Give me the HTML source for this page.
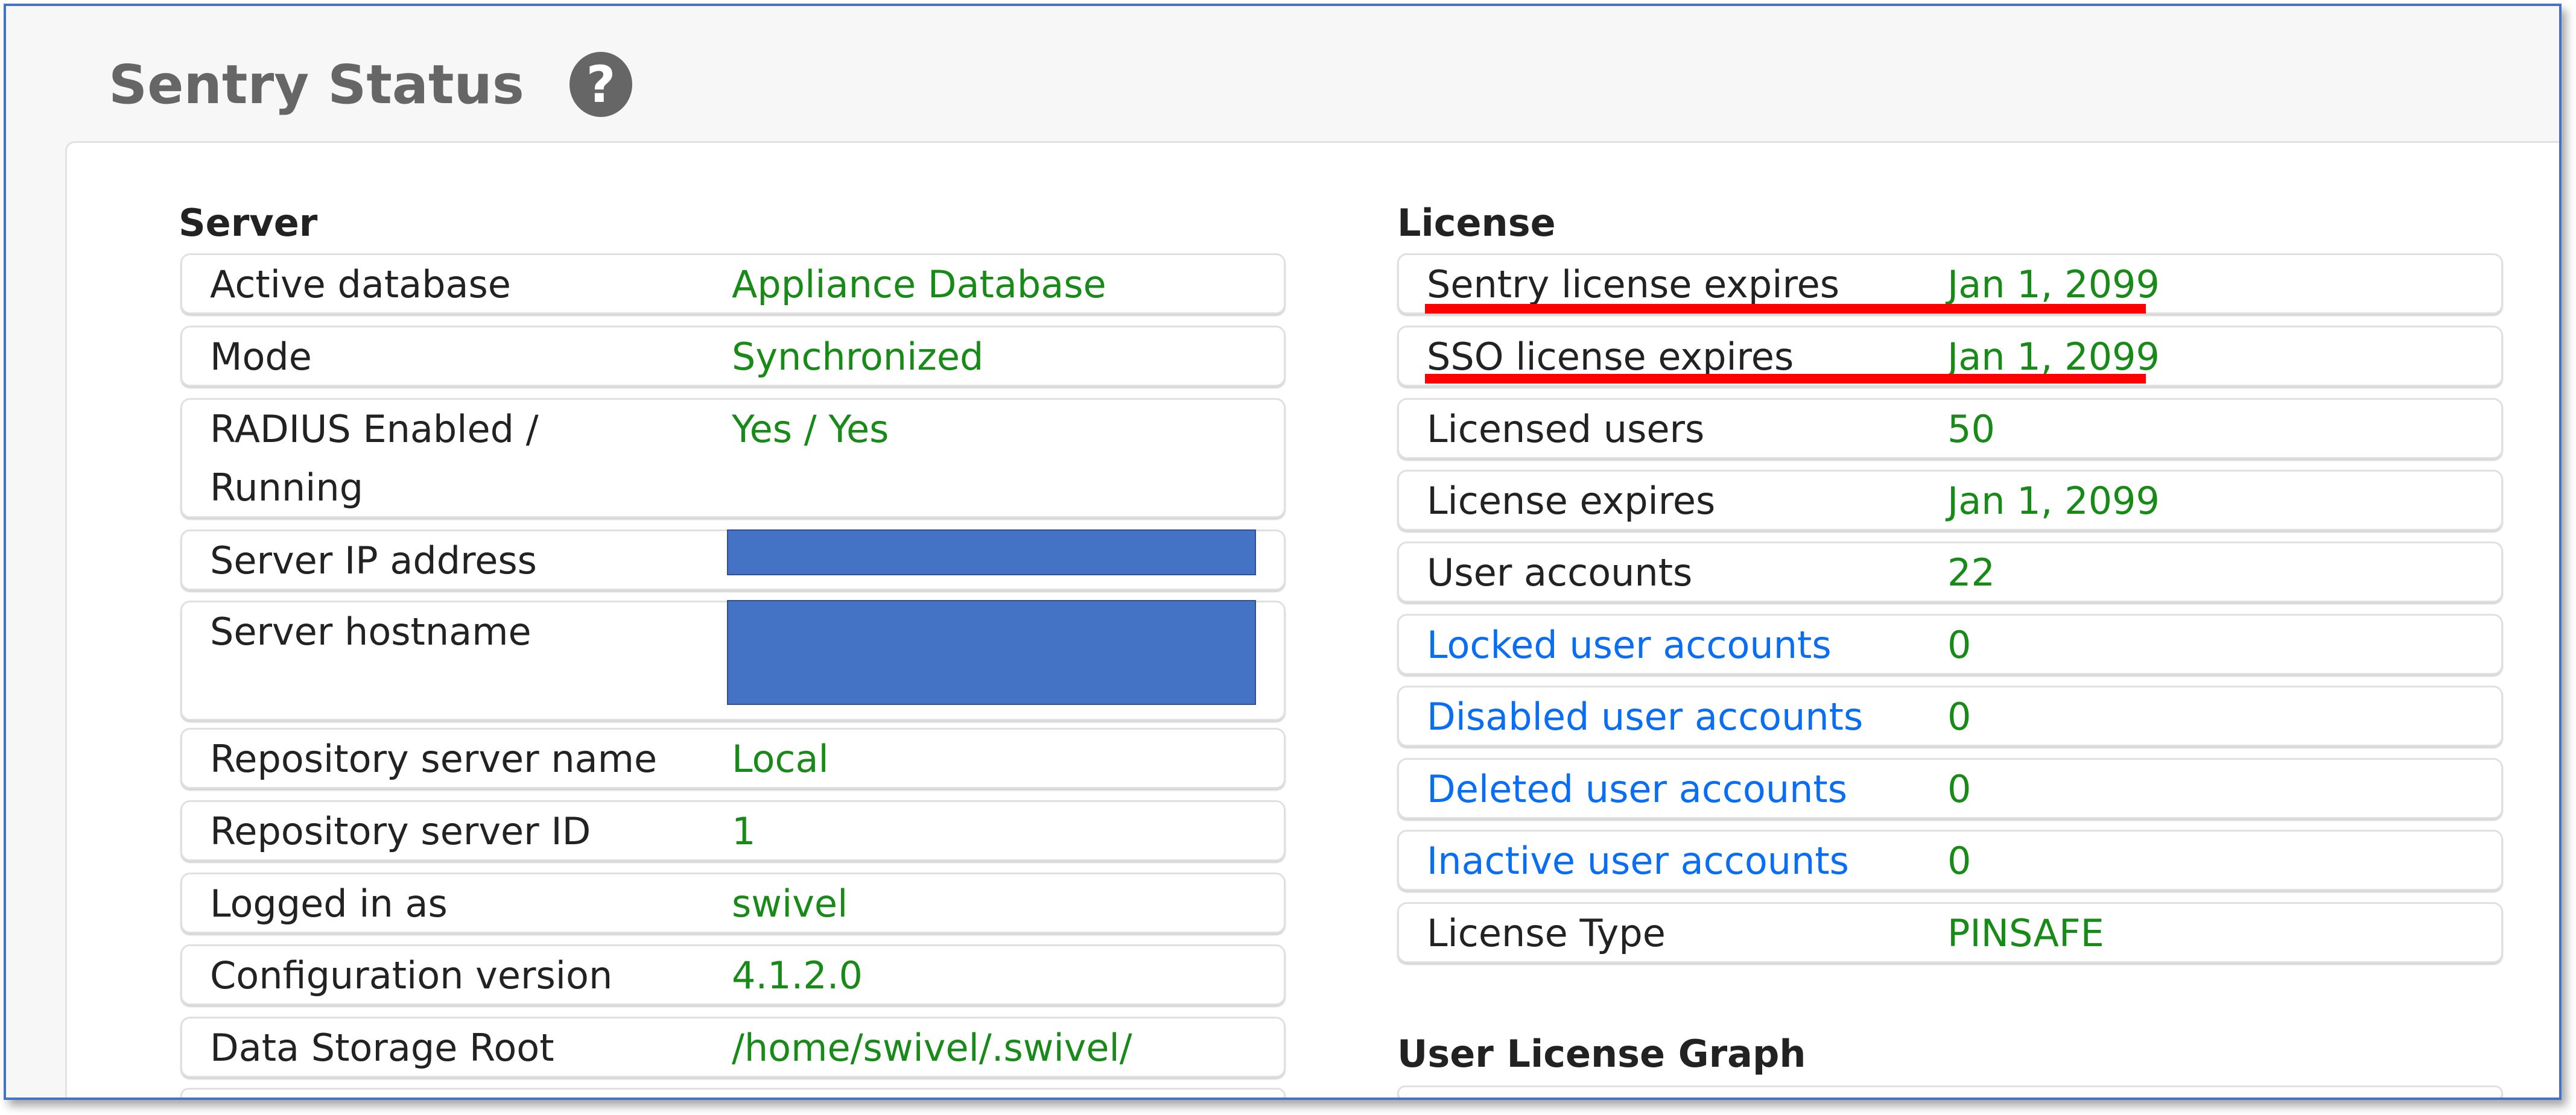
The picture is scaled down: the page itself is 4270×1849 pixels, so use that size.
<!DOCTYPE html>
<html><head><meta charset="utf-8"><style>
html,body{margin:0;padding:0;width:4270px;height:1849px;overflow:hidden;background:#fff;font-family:"DejaVu Sans","Liberation Sans",sans-serif;}
#frame{position:absolute;left:6px;top:6px;width:4232px;height:1810px;border:4px solid #4472c4;background:#f7f7f7;overflow:hidden;box-shadow:8px 10px 14px rgba(0,0,0,0.35);}
.title{position:absolute;left:170px;top:70px;font-size:89px;font-weight:bold;color:#666;line-height:120px;}
.help{position:absolute;left:934px;top:76px;width:104px;height:108px;border-radius:50%;background:#666;color:#fff;font-weight:bold;font-size:84px;line-height:108px;text-align:center;}
#panel{position:absolute;left:98px;top:224px;width:4200px;height:1600px;background:#fff;border:3px solid #e2e2e2;border-radius:16px;}
.h{position:absolute;font-size:62px;font-weight:bold;color:#222;line-height:80px;}
.row{position:absolute;height:95px;border:3px solid #e0e0e0;border-radius:16px;background:#fff;box-shadow:0 3px 2px #d4d4d4;font-size:62px;line-height:97px;color:#222;overflow:hidden;}
.row.d{height:193px;}
.row span{position:absolute;top:0;white-space:nowrap;}
.L{left:289px;width:1826px;}
.R{left:2306px;width:1827px;}
.L .k{left:46px;width:760px;white-space:normal !important;}
.L .v{left:911px;color:#178a17;}
.R .k{left:46px;}
.R .v{left:909px;color:#178a17;}
.a{color:#0a6ef5;}
.blue{position:absolute;background:#4472c4;border:2px solid #2f528f;}
.red{position:absolute;left:2352px;width:1195px;height:16px;background:#ff0000;}
</style></head><body>
<div id="frame">
<div class="title">Sentry Status</div>
<div class="help">?</div>
<div id="panel"></div>

<div class="h" style="left:286px;top:320px">Server</div>
<div class="h" style="left:2306px;top:320px">License</div>

<div class="row L" style="top:410px"><span class="k">Active database</span><span class="v">Appliance Database</span></div>
<div class="row L" style="top:530px"><span class="k">Mode</span><span class="v">Synchronized</span></div>
<div class="row L d" style="top:650px"><span class="k">RADIUS Enabled / Running</span><span class="v">Yes / Yes</span></div>
<div class="row L" style="top:868px"><span class="k">Server IP address</span></div>
<div class="row L d" style="top:986px"><span class="k">Server hostname</span></div>
<div class="row L" style="top:1197px"><span class="k">Repository server name</span><span class="v">Local</span></div>
<div class="row L" style="top:1317px"><span class="k">Repository server ID</span><span class="v">1</span></div>
<div class="row L" style="top:1437px"><span class="k">Logged in as</span><span class="v">swivel</span></div>
<div class="row L" style="top:1556px"><span class="k">Configuration version</span><span class="v">4.1.2.0</span></div>
<div class="row L" style="top:1676px"><span class="k">Data Storage Root</span><span class="v">/home/swivel/.swivel/</span></div>
<div class="row L" style="top:1794px;height:20px"></div>

<div class="blue" style="left:1195px;top:868px;width:873px;height:72px"></div>
<div class="blue" style="left:1195px;top:985px;width:873px;height:170px"></div>

<div class="row R" style="top:410px"><span class="k">Sentry license expires</span><span class="v">Jan 1, 2099</span></div>
<div class="row R" style="top:530px"><span class="k">SSO license expires</span><span class="v">Jan 1, 2099</span></div>
<div class="row R" style="top:650px"><span class="k">Licensed users</span><span class="v">50</span></div>
<div class="row R" style="top:769px"><span class="k">License expires</span><span class="v">Jan 1, 2099</span></div>
<div class="row R" style="top:888px"><span class="k">User accounts</span><span class="v">22</span></div>
<div class="row R" style="top:1008px"><span class="k a">Locked user accounts</span><span class="v">0</span></div>
<div class="row R" style="top:1127px"><span class="k a">Disabled user accounts</span><span class="v">0</span></div>
<div class="row R" style="top:1247px"><span class="k a">Deleted user accounts</span><span class="v">0</span></div>
<div class="row R" style="top:1366px"><span class="k a">Inactive user accounts</span><span class="v">0</span></div>
<div class="row R" style="top:1486px"><span class="k">License Type</span><span class="v">PINSAFE</span></div>
<div class="h" style="left:2306px;top:1698px">User License Graph</div>
<div class="row R" style="top:1790px;height:20px"></div>

<div class="red" style="top:494px"></div>
<div class="red" style="top:610px"></div>
</div>
</body></html>
